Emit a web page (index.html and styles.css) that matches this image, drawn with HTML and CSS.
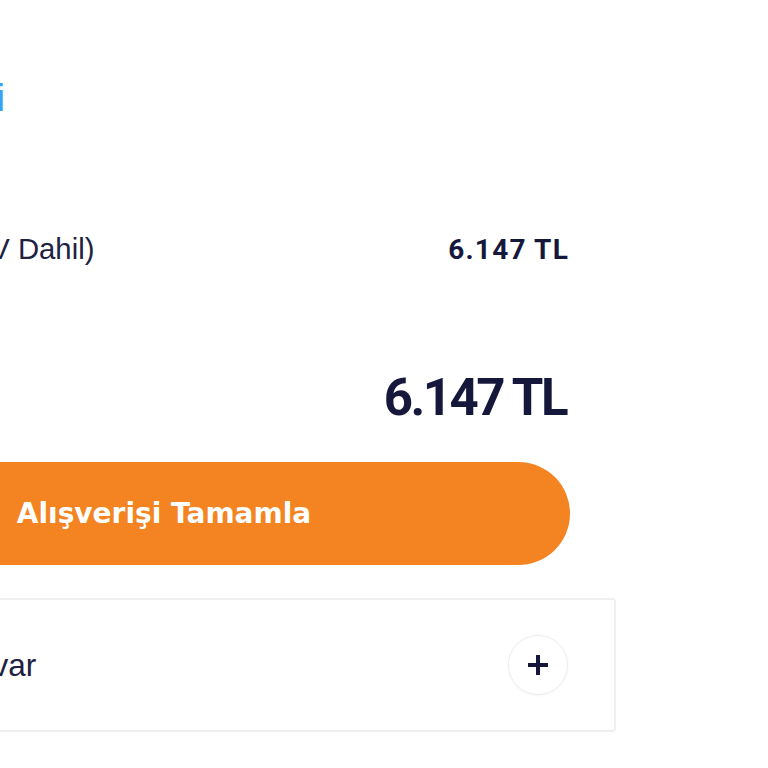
FILE: index.html
```html
<!DOCTYPE html>
<html lang="tr">
<head>
    <meta charset="UTF-8">
    <meta name="viewport" content="width=device-width, initial-scale=1.0">
    <title>Sepet Özeti</title>
    <link rel="stylesheet" href="styles.css">
</head>
<body>
    <div class="panel">
        <!-- özet -->
        <div class="summary">
            <h2 class="summary-title">Sipariş Özeti</h2>

            <div class="summary-row">
                <span class="row-label">Ara Toplam (KDV Dahil)</span>
                <span class="row-price">6.147 TL</span>
            </div>

            <div class="summary-total">
                <span class="row-label">Toplam</span>
                <span class="total-price">6.147 TL</span>
            </div>

            <button class="checkout-btn">Alışverişi Tamamla</button>
        </div>

        <!-- indirim kodu -->
        <div class="coupon">
            <span class="coupon-label">İndirim kodum var</span>
            <span class="coupon-toggle">
                <svg width="22" height="22" viewBox="0 0 22 22">
                    <path d="M11 1v20M1 11h20" stroke="#15183a" stroke-width="4" fill="none"/>
                </svg>
            </span>
        </div>
    </div>
</body>
</html>
```

FILE: styles.css
```css
:root {
    --navy: #15183a;
    --text: #1e2142;
    --orange: #f48421;
    --blue: #3aa2f0;
}

* {
    box-sizing: border-box;
    margin: 0;
    padding: 0;
}

body {
    background: #fff;
    font-family: 'Liberation Sans', Arial, sans-serif;
    color: var(--text);
    overflow: hidden;
}

.panel {
    width: 880px;
    margin-left: -264px;
}

.summary {
    padding: 0 48px;
}

.summary-title {
    margin-top: 74px;
    font-size: 39px;
    line-height: 48px;
    font-weight: normal;
    color: var(--blue);
}

/* satırlar */
.summary-row {
    display: flex;
    justify-content: space-between;
    align-items: baseline;
    margin-top: 107px;
    line-height: 40px;
}

.row-label {
    font-size: 29.3px;
}

.row-price {
    font-family: Roboto, sans-serif;
    font-weight: 700;
    font-size: 28px;
    letter-spacing: 1.2px;
    margin-right: -1px;
    color: var(--navy);
}

.summary-total {
    display: flex;
    justify-content: space-between;
    align-items: baseline;
    margin-top: 98px;
    line-height: 60px;
}

.total-price {
    font-family: Roboto, sans-serif;
    font-weight: 700;
    font-size: 51px;
    letter-spacing: -2.5px;
    margin-right: 2px;
    color: var(--navy);
}

.checkout-btn {
    display: block;
    width: calc(100% + 2px);
    height: 103px;
    margin-top: 27px;
    padding-right: 26px;
    border: none;
    border-radius: 52px;
    background: var(--orange);
    color: #fff;
    font-family: 'DejaVu Sans', Verdana, sans-serif;
    font-weight: 700;
    font-size: 28px;
    cursor: pointer;
}

/* kupon kutusu */
.coupon {
    display: flex;
    justify-content: space-between;
    align-items: center;
    height: 134px;
    margin-top: 33px;
    padding: 0 46px 0 48px;
    border: 2px solid #efeff1;
    border-radius: 4px;
}

.coupon-label {
    font-size: 31.5px;
}

.coupon-toggle {
    display: flex;
    align-items: center;
    justify-content: center;
    width: 60px;
    height: 60px;
    border-radius: 50%;
    border: 1px solid #ececef;
    box-shadow: 0 1px 3px rgba(0,0,0,0.04);
}
```
